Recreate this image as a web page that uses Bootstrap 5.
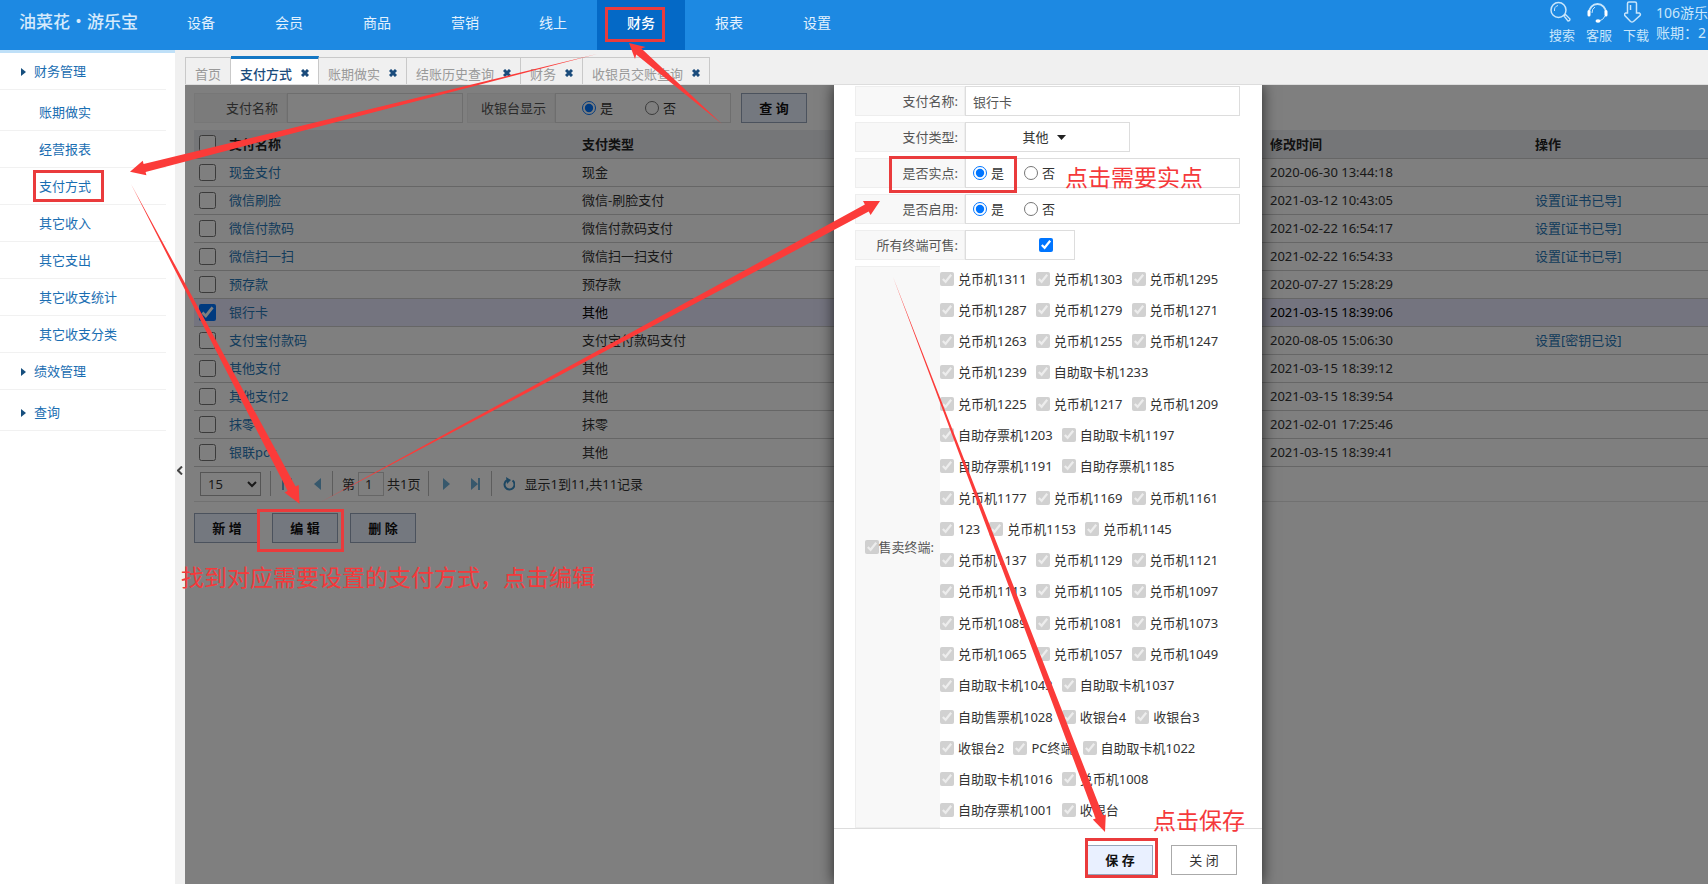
<!DOCTYPE html>
<html lang="zh-CN">
<head>
<meta charset="utf-8">
<meta name="viewport" content="width=device-width, initial-scale=1">
<title>支付方式</title>
<link href="https://cdn.jsdelivr.net/npm/bootstrap@5.3.0/dist/css/bootstrap.min.css" rel="stylesheet">
<style>
  body{font:13px/20px "Noto Sans","Noto Sans CJK SC",sans-serif;color:#333;height:100vh;overflow:hidden;background:#fff}
  a{text-decoration:none}
  button,input,select{font:inherit;color:inherit}
  .topbar{height:50px;background:#1d89e2;color:#e3f1fd}
  .brand{width:157px;padding-left:19px;font:500 17px/42px "Noto Sans CJK SC",sans-serif;color:#d5eafc}
  .mainmenu a{width:88px;height:50px;line-height:46px;font-size:14px;text-align:center;color:#e3f1fd}
  .mainmenu a.active{background:#0469c6;color:#fff;font-weight:500}
  .tool{width:37px;padding-left:4px;color:#c9e6fb;white-space:nowrap}
  .tool svg{display:block;margin:1px 0 2px 1px}
  .account{width:52px;font-size:14px;color:#c9e6fb;padding-top:3px}
  .side{width:175px;border-top:3px solid #bfe0f8}
  .side a{display:block;height:37px;line-height:36px;margin-right:9px;padding-left:39px;color:#1a6eb2;border-bottom:1px solid #f1f1f1}
  .side a.group{padding-left:21px}
  .side a.group svg{margin-right:8px;margin-top:-2px}
  .side a.spaced{margin-top:4px}
  .grip{width:10px;padding-top:6px;background:#f0f0f0;color:#444}
  .tabs{height:35px;background:#f0f0f0;border-bottom:1px solid #ddd;align-items:flex-end}
  .tabs a{height:27px;line-height:32px;padding:0 9px;border:1px solid #c9c9c9;border-bottom:0;border-left-width:0;color:#999;white-space:nowrap}
  .tabs a:first-child{border-left-width:1px}
  .tabs a.active{height:28px;line-height:30px;border-top:3px solid #1377c4;background:#fff;color:#1b4c7c;font-weight:500}
  .tabs svg{margin-top:-5px;margin-left:9px}
  .work{padding:8px 0 0 9px}
  .cap{background:#f6f6f6;border:1px solid #eee;height:30px;line-height:28px;text-align:right;color:#555}
  .field{border:1px solid #ddd;height:30px;background:#fff}
  .field:focus{outline:0}
  .act{height:30px;width:66px;border:1px solid #96a5ba;background:#e9f0ff;font-weight:700;color:#111;line-height:26px;padding:0}
  .act.plain{background:#fff;font-weight:400;color:#333;border-color:#aaa}
  .grid{width:100%;table-layout:fixed;border-collapse:collapse}
  .grid th{height:28px;background:#ebecf1;border-bottom:1px solid #ccc;color:#222}
  .grid td{height:28px;border-bottom:1px solid #ccc}
  .grid th,.grid td{padding:0 5px}
  .grid td a{color:#2878b8}
  .grid tr.picked{background:#e9e9ff;color:#000}
  .grid input{width:17px;height:17px;display:block;margin:-4px 0 0 2px}
  .pager{height:35px;border-bottom:1px solid #e2e2e2;color:#333}
  .pager .rule{width:1px;height:25px;background:#bbb}
  .pager .ico{border:0;background:none;padding:0;display:flex;color:#6fb0d8;width:12px}
  .pager select{width:61px;height:24px;border:1px solid #aaa;background:#fff;padding:0 3px}
  .pager input{width:26px;height:24px;border:1px solid #ccc;padding:0 6px}
  .shade{inset:0;background:rgba(0,0,0,.5)}
  .dialogbox{top:0;bottom:0;right:446px;width:428px;background:#fff;box-shadow:0 0 14px rgba(0,0,0,.7)}
  .fields{padding:1px 22px 0 21px;gap:6px}
  .fields .cap{width:110px;padding-right:6px;background:#f8f8f8}
  .fields .field{padding-left:7px}
  input[type=radio]{width:14px;height:14px;margin:0}
  input[type=checkbox]{margin:0}
  .terms .cap{width:85px;height:auto;padding:0 6px 0 0;border-right:0}
  .terms input{width:14px;height:14px}
  .terms label{display:flex;align-items:center;gap:4px;white-space:nowrap}
  .termlist{margin:-3px 0 2px}
  .foot{height:56px;border-top:1px solid #ddd;padding:7px 25px 0;gap:18px}
  .marks{inset:0;width:100%;height:100%;pointer-events:none}
  .marks text{font:23px "Noto Sans CJK SC",sans-serif;fill:#f5393b}
</style>
</head>
<body class="d-flex flex-column position-relative">
<header class="topbar d-flex flex-shrink-0">
  <div class="brand">油菜花・游乐宝</div>
  <nav class="mainmenu d-flex flex-grow-1">
    <a href="#">设备</a><a href="#">会员</a><a href="#">商品</a><a href="#">营销</a><a href="#">线上</a><a href="#" class="active">财务</a><a href="#">报表</a><a href="#">设置</a>
  </nav>
  <a class="tool" href="#"><svg width="22" height="22" fill="none" stroke="currentColor"><circle cx="8.500" cy="9" r="7.500" stroke-width="1.500"/><path d="M4.500 10Q4 5.500 8 4.500"/><path d="M14 15l1.500-1.500 4.500 4.500q0 2-2 2z" stroke-width="1.300"/></svg>搜索</a>
  <a class="tool" href="#"><svg width="22" height="22" fill="none" stroke="currentColor"><path d="M2 12a8.500 9 0 1 1 17 0" stroke-width="2"/><path d="M5 12a5.500 6.500 0 0 1 3-6M18 15q-1.500 4-6 5" stroke-width="1"/><path d="M2 10.500v3.500M19 10.500v3.500" stroke="#fff" stroke-width="3" stroke-linecap="round"/><ellipse cx="11" cy="20" rx="2.500" ry="1.700" fill="#fff" stroke="none"/></svg>客服</a>
  <a class="tool" href="#"><svg width="22" height="22" fill="none" stroke="currentColor" stroke-width="1.500"><path d="M5 1h6q1.500 0 1.500 1.500V12h3q1.500 1 .5 2.500L9.500 20.500q-1.500 1-3 0L.8 14.500Q0 13 1.500 12h2V2.500Q3.500 1 5 1zM6.500 4v5"/></svg>下载</a>
  <div class="account text-nowrap overflow-hidden">106游乐<br>账期：2</div>
</header>
<div class="d-flex flex-grow-1" style="min-height:0">
  <nav class="side flex-shrink-0">
    <a class="group" href="#"><svg width="5" height="8"><path d="M0 0l5 4-5 4z" fill="#174f7e"/></svg>财务管理</a>
    <a class="spaced" href="#">账期做实</a><a href="#">经营报表</a><a href="#">支付方式</a><a href="#">其它收入</a><a href="#">其它支出</a><a href="#">其它收支统计</a><a href="#">其它收支分类</a>
    <a class="group" href="#"><svg width="5" height="8"><path d="M0 0l5 4-5 4z" fill="#174f7e"/></svg>绩效管理</a>
    <a class="group spaced" href="#"><svg width="5" height="8"><path d="M0 0l5 4-5 4z" fill="#174f7e"/></svg>查询</a>
  </nav>
  <div class="grip d-flex align-items-center justify-content-center flex-shrink-0"><svg width="6" height="9" fill="none" stroke="currentColor" stroke-width="2"><path d="M5 .5L1 4.500l4 4"/></svg></div>
  <main class="d-flex flex-column flex-grow-1" style="min-width:0">
    <div class="tabs d-flex flex-shrink-0" id="tabs"></div>
    <div class="position-relative flex-grow-1 overflow-hidden">
      <div class="work">
        <form class="d-flex">
          <label class="cap pe-2" for="q" style="width:93px">支付名称</label>
          <input class="field" id="q" style="width:176px">
          <div class="cap ms-1 pe-2" style="width:88px">收银台显示</div>
          <div class="field d-flex align-items-center" style="width:176px;padding-left:26px">
            <label class="d-flex align-items-center gap-1" style="width:63px"><input type="radio" name="show" checked>是</label>
            <label class="d-flex align-items-center gap-1"><input type="radio" name="show">否</label>
          </div>
          <button type="button" class="act" style="margin-left:10px">查 询</button>
        </form>
        <table class="grid" style="margin-top:7px">
          <colgroup><col style="width:30px"><col style="width:353px"><col><col style="width:265px"><col style="width:178px"></colgroup>
          <thead><tr><th><input type="checkbox" aria-label="全选"></th><th>支付名称</th><th>支付类型</th><th>修改时间</th><th>操作</th></tr></thead>
          <tbody id="rows"></tbody>
        </table>
        <div class="pager d-flex align-items-center">
          <select aria-label="每页" style="margin:0 9px 0 6px"><option>15</option></select><i class="rule"></i>
          <button class="ico" aria-label="首页" style="margin:0 19px 0 10px"><svg width="12" height="12" fill="currentColor"><path d="M1 0h2v12H1zM11 0v12L4 6z"/></svg></button>
          <button class="ico" aria-label="上页" style="margin-right:8px"><svg width="12" height="12" fill="currentColor"><path d="M9 0v12L2 6z"/></svg></button><i class="rule"></i>
          <label class="d-flex align-items-center" style="margin-left:9px;gap:3px">第<input value="1"></label><span style="margin:0 8px 0 3px">共1页</span><i class="rule"></i>
          <button class="ico" aria-label="下页" style="margin:0 17px 0 12px"><svg width="12" height="12" fill="currentColor"><path d="M2 0v12l7-6z"/></svg></button>
          <button class="ico" aria-label="末页" style="margin-right:9px"><svg width="12" height="12" fill="currentColor"><path d="M8 0h2v12H8zM1 0v12l7-6z"/></svg></button><i class="rule"></i>
          <button class="ico" aria-label="刷新" style="margin:0 9px 0 11px"><svg width="13" height="14" fill="none" stroke="#3d8fc4" stroke-width="2"><path d="M9.500 3.500A5 5 0 1 1 4 3.200"/><path d="M3 0l5 3-4 4z" fill="#3d8fc4" stroke="none"/></svg></button>
          <span>显示1到11,共11记录</span>
        </div>
        <div class="d-flex" style="gap:12px;margin-top:11px"><button class="act">新 增</button><button class="act">编 辑</button><button class="act">删 除</button></div>
      </div>
      <div class="shade position-absolute"></div>
      <section class="dialogbox position-absolute d-flex flex-column">
        <form class="fields d-flex flex-column flex-grow-1" style="min-height:0">
          <div class="d-flex"><label class="cap" for="nm">支付名称:</label><input id="nm" class="field flex-grow-1" style="color:#555" value="银行卡"></div>
          <div class="d-flex"><div class="cap">支付类型:</div><button type="button" class="field d-flex align-items-center justify-content-center" style="width:165px;gap:8px;padding-right:14px">其他<svg width="9" height="5"><path d="M0 0h9L4.500 5z" fill="#222"/></svg></button></div>
          <div class="d-flex"><div class="cap">是否实点:</div><div class="field flex-grow-1 d-flex align-items-center"><label class="d-flex align-items-center gap-1" style="width:51px"><input type="radio" name="real" checked>是</label><label class="d-flex align-items-center gap-1"><input type="radio" name="real">否</label></div></div>
          <div class="d-flex"><div class="cap">是否启用:</div><div class="field flex-grow-1 d-flex align-items-center"><label class="d-flex align-items-center gap-1" style="width:51px"><input type="radio" name="use" checked>是</label><label class="d-flex align-items-center gap-1"><input type="radio" name="use">否</label></div></div>
          <div class="d-flex"><label class="cap" for="all">所有终端可售:</label><div class="field d-flex align-items-center justify-content-end" style="width:110px;padding-right:21px"><input type="checkbox" id="all" checked style="width:14px;height:14px"></div></div>
          <div class="terms d-flex flex-grow-1">
            <label class="cap justify-content-end" style="gap:0"><input type="checkbox" checked disabled>售卖终端:</label>
            <div class="termlist d-flex flex-column flex-grow-1" id="terms"></div>
          </div>
        </form>
        <div class="foot d-flex align-items-center justify-content-end flex-shrink-0"><button class="act">保 存</button><button class="act plain">关 闭</button></div>
      </section>
    </div>
  </main>
</div>
<svg class="marks position-absolute">
  <g fill="none" stroke="#ea3b3c" stroke-width="3">
    <rect x="606.500" y="8.500" width="57" height="32"/><rect x="34.500" y="171.500" width="68" height="29"/>
    <rect x="258.500" y="510.500" width="84" height="40"/><rect x="890.500" y="157.500" width="125" height="34"/><rect x="1086.500" y="839.500" width="70" height="37"/>
  </g>
  <g fill="#fb3b39">
    <path d="M722 124L636.200 54.500L635 58.900L629 43L645.600 46.900L641.400 48.500z"/>
    <path d="M597 54L145.600 171.900L146.400 175.300L130 171.700L142.700 160.700L143.600 164.100z"/>
    <path d="M131 184L295.600 486.600L298.700 485L299.500 503.700L284.500 492.400L287.600 490.800z"/>
    <path d="M319 503L868.700 211.600L870.600 215.100L880 201L863 201.100L864.900 204.600z"/>
    <path d="M893 277L1103 815.600L1105.800 814.500L1105 832L1092.800 819.500L1095.600 818.400z"/>
  </g>
  <text x="1065" y="186">点击需要实点</text><text x="1153" y="829">点击保存</text><text x="181" y="586">找到对应需要设置的支付方式，点击编辑</text>
</svg>
<script src="https://cdn.jsdelivr.net/npm/bootstrap@5.3.0/dist/js/bootstrap.bundle.min.js"></script>
<script>
  const cross = '<svg width="8" height="8" stroke="#1b4c7c" stroke-width="3"><path d="M1 1l6 6M7 1L1 7"/></svg>';
  document.getElementById('tabs').innerHTML = ['首页','支付方式','账期做实','结账历史查询','财务','收银员交账查询']
    .map((t,i)=>`<a href="#" class="${i===1?'active':''}">${t}${i?cross:''}</a>`).join('');
  const rows = [
    ['现金支付','现金','2020-06-30 13:44:18',''],['微信刷脸','微信-刷脸支付','2021-03-12 10:43:05','设置[证书已导]'],
    ['微信付款码','微信付款码支付','2021-02-22 16:54:17','设置[证书已导]'],['微信扫一扫','微信扫一扫支付','2021-02-22 16:54:33','设置[证书已导]'],
    ['预存款','预存款','2020-07-27 15:28:29',''],['银行卡','其他','2021-03-15 18:39:06',''],
    ['支付宝付款码','支付宝付款码支付','2020-08-05 15:06:30','设置[密钥已设]'],['其他支付','其他','2021-03-15 18:39:12',''],
    ['其他支付2','其他','2021-03-15 18:39:54',''],['抹零','抹零','2021-02-01 17:25:46',''],['银联pos','其他','2021-03-15 18:39:41','']];
  document.getElementById('rows').innerHTML = rows.map((r,i)=>`<tr class="${i===5?'picked':''}"><td><input type="checkbox" aria-label="${r[0]}" ${i===5?'checked':''}></td><td><a href="#">${r[0]}</a></td><td>${r[1]}</td><td>${r[2]}</td><td>${r[3]?`<a href="#">${r[3]}</a>`:''}</td></tr>`).join('');
  const D='兑币机',Q='自助取卡机',C='自助存票机',S='收银台';
  const terms = [[D+1311,D+1303,D+1295],[D+1287,D+1279,D+1271],[D+1263,D+1255,D+1247],[D+1239,Q+1233],[D+1225,D+1217,D+1209],[C+1203,Q+1197],[C+1191,C+1185],
    [D+1177,D+1169,D+1161],['123',D+1153,D+1145],[D+1137,D+1129,D+1121],[D+1113,D+1105,D+1097],[D+1089,D+1081,D+1073],[D+1065,D+1057,D+1049],
    [Q+1043,Q+1037],['自助售票机1028',S+4,S+3],[S+2,'PC终端',Q+1022],[Q+1016,D+1008],[C+1001,S]];
  document.getElementById('terms').innerHTML = terms.map(r=>`<div class="d-flex flex-fill align-items-center" style="gap:9px">${r.map(t=>`<label><input type="checkbox" checked disabled>${t}</label>`).join('')}</div>`).join('');
</script>
</body>
</html>
